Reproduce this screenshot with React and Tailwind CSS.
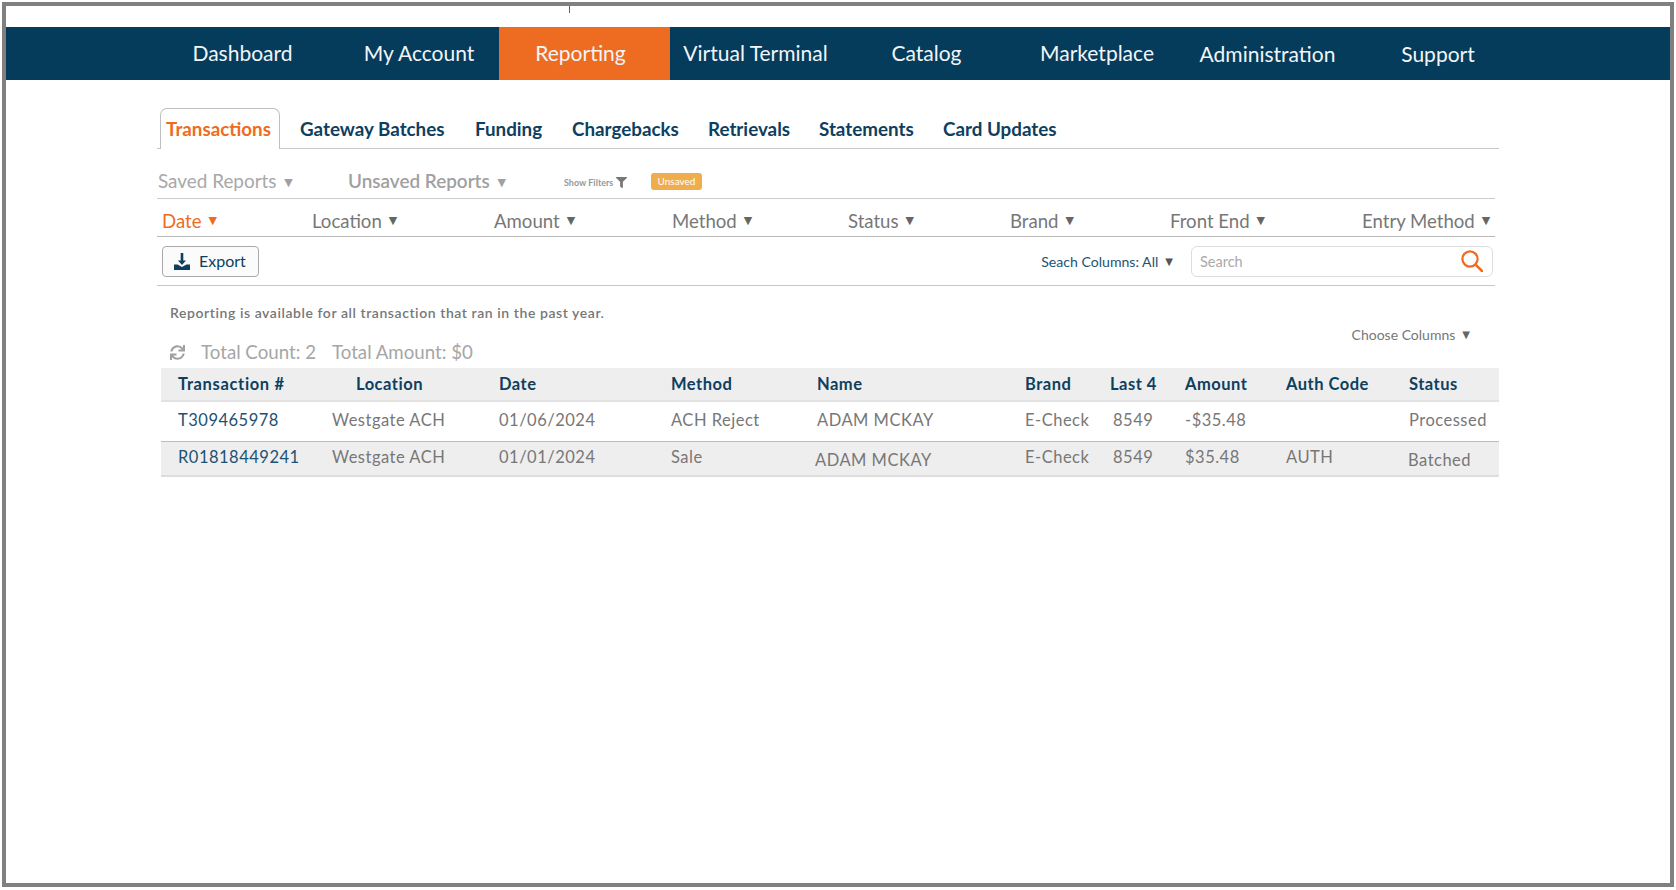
import React from "react";
import { FaSync, FaFilter } from "react-icons/fa";

const navItems = [
  ["Dashboard", "w-[171px] pb-[2px]"],
  ["My Account", "w-[171px] pl-[11px] pb-[2px]"],
  ["Reporting", "w-[171px] pr-[8px] pb-[2px] bg-[#ee6c21]"],
  ["Virtual Terminal", "w-[171px] pb-[2px]"],
  ["Catalog", "w-[171px] pb-[2px]"],
  ["Marketplace", "w-[171px] pr-[1px] pb-[2px]"],
  ["Administration", "w-[171px] pr-[2px]"],
  ["Support", "w-[171px] pr-[3px]"],
];

const tabs = [
  ["Gateway Batches", "w-[175px]"],
  ["Funding", "w-[97px]"],
  ["Chargebacks", "w-[136px]"],
  ["Retrievals", "w-[111px]"],
  ["Statements", "w-[124px]"],
  ["Card Updates", "w-auto"],
];

const filters = [
  ["Date", "w-[150px] text-[#ee6c21]"],
  ["Location", "w-[182px] text-[#777777]"],
  ["Amount", "w-[178px] text-[#777777]"],
  ["Method", "w-[176px] text-[#777777]"],
  ["Status", "w-[162px] text-[#777777]"],
  ["Brand", "w-[160px] text-[#777777]"],
  ["Front End", "w-[192px] text-[#777777]"],
  ["Entry Method", "text-[#777777]"],
];

const cols =
  "grid grid-cols-[154px_167px_172px_146px_208px_85px_75px_101px_123px_1fr] pl-[17px]";

function Arrow({ className = "" }) {
  return <span className={"font-['DejaVu_Sans'] " + className}>▼</span>;
}

function ExportIcon() {
  return (
    <svg viewBox="0 0 16 17" className="h-[17px] w-[16px] fill-[#0d4060]">
      <path d="M6.7 0h2.6v7.5h2.7L8 12 4 7.5h2.7z" />
      <path d="M0 11.5h3.6L8 14l4.4-2.5H16V17H0z" />
    </svg>
  );
}

function SearchIcon() {
  return (
    <svg viewBox="0 0 22 22" fill="none" className="h-[22px] w-[22px] stroke-[#ee6c21]">
      <circle cx="9" cy="9" r="7.6" strokeWidth="2.2" />
      <path d="M14.6 14.6 21 21" strokeWidth="2.6" strokeLinecap="round" />
    </svg>
  );
}

function Row({ id, date, method, name, auth, amount, status, shade }) {
  return (
    <div
      className={
        cols +
        " text-[16.5px] tracking-[0.5px] text-[#777777] " +
        (shade
          ? "h-[35px] border-b-2 border-[#dddddd] bg-[#eeeeee] pt-[3px] leading-[24px]"
          : "h-[40px] border-b border-[#bbbbbb] pt-[6px] leading-[24px]")
      }
    >
      <span className="text-[#1d5272]">{id}</span>
      <span>Westgate ACH</span>
      <span>{date}</span>
      <span>{method}</span>
      <span className={shade ? "-ml-[2px] pt-[3px]" : ""}>{name}</span>
      <span>E-Check</span>
      <span className="pl-[3px]">8549</span>
      <span>{amount}</span>
      <span>{auth}</span>
      <span className={shade ? "-ml-[1px] pt-[3px]" : ""}>{status}</span>
    </div>
  );
}

export default function App() {
  return (
    <div className="h-[890px] w-[1676px] bg-white p-[2px] font-['Lato',sans-serif]">
      <div className="h-[885px] w-[1672px] border-4 border-[#808080] bg-white pt-[21px]">
        <div className="relative">
          <span className="absolute -top-[21px] left-[563px] h-[7px] w-[1px] bg-[#3c6e8f]" />
        </div>
        <nav className="flex h-[53px] w-[1664px] bg-[#053c5c] pl-[151px] text-[21px] text-[#f2f5f7]">
          {navItems.map(([label, cls]) => (
            <a key={label} className={"flex h-full items-center justify-center " + cls}>
              {label}
            </a>
          ))}
        </nav>

        <main className="ml-[151px] mt-[28px] w-[1342px]">
          <div className="flex h-[41px] items-end border-b border-[#c8c8c8] text-[18.8px] font-bold text-[#0d4060]">
            <a className="-mb-px ml-[3px] mr-[20px] flex h-[41px] w-[120px] items-center justify-center rounded-t-[7px] border border-b-0 border-[#c0c0c0] bg-white pr-[3px] text-[#ee6c21]">
              Transactions
            </a>
            {tabs.map(([t, w]) => (
              <a key={t} className={"flex h-[40px] items-center pt-[2px] " + w}>
                {t}
              </a>
            ))}
          </div>

          <div className="w-[1338px]">
            <div className="flex h-[50px] items-center border-b border-[#cccccc] pl-px pt-[15px]">
              <span className="w-[190px] text-[18.9px] text-[#a8a8a8]">
                Saved Reports <Arrow className="ml-[3px] align-[2px] text-[11px] text-[#a0a0a0]" />
              </span>
              <span className="w-[216px] text-[18.9px] font-semibold text-[#a0a0a0]">
                Unsaved Reports <Arrow className="ml-[3px] align-[2px] text-[11px] text-[#a0a0a0]" />
              </span>
              <span className="flex w-[87px] items-center pt-[3px] text-[9px] font-bold text-[#999999]">
                Show Filters
                <FaFilter className="ml-[3px] h-[11px] w-[11px] text-[#777777]" />
              </span>
              <span className="flex h-[17px] w-[51px] items-center justify-center rounded-[3px] bg-[#f0ad4e] text-[10px] text-white">
                Unsaved
              </span>
            </div>

            <div className="flex h-[38px] items-center border-b border-[#b8b8b8] pl-[5px] pt-[8px] text-[18.6px]">
              {filters.map(([label, cls]) => (
                <span key={label} className={"flex items-center whitespace-nowrap " + cls}>
                  {label}
                  <Arrow className={"ml-[7px] text-[11px] " + (label === "Date" ? "text-[#ee6c21]" : "text-[#666666]")} />
                </span>
              ))}
            </div>

            <div className="flex h-[49px] items-center border-b border-[#c8c8c8] pl-[5px] pr-[2px]">
              <button className="flex h-[31px] w-[97px] items-center rounded-[4px] border border-[#aaaaaa] bg-[#fbfbfb] pl-[11px] text-[16px] text-[#0d4060]">
                <ExportIcon />
                <span className="ml-[9px]">Export</span>
              </button>
              <span className="ml-auto flex items-center pt-[1px] text-[14.1px] text-[#1d5272]">
                Seach Columns: All
                <Arrow className="ml-[7px] text-[10px] text-[#555555]" />
              </span>
              <div className="ml-[18px] flex h-[31px] w-[302px] items-center justify-between rounded-[6px] border border-[#dddddd] pl-[8px] pr-[9px] text-[14.5px] text-[#aaaaaa]">
                <span className="pt-[2px]">Search</span>
                <SearchIcon />
              </div>
            </div>
          </div>

          <div className="h-[82px] w-[1338px] pl-[13px]">
            <p className="pt-[17px] text-[14px] font-semibold leading-[20px] tracking-[0.57px] text-[#777777]">
              Reporting is available for all transaction that ran in the past year.
            </p>
            <div className="flex items-start justify-between pr-[25px]">
              <div className="flex items-center pt-[16px] text-[18.7px] leading-[26px] text-[#a6a6a6]">
                <FaSync className="h-[15px] w-[15px] text-[#a0a0a0]" />
                <span className="ml-[16px]">Total Count: 2</span>
                <span className="ml-[16px]">Total Amount: $0</span>
              </div>
              <span className="mt-[1px] flex items-center text-[14px] text-[#777777]">
                Choose Columns
                <Arrow className="ml-[7px] text-[10px] text-[#666666]" />
              </span>
            </div>
          </div>

          <div className="ml-[4px] w-[1338px]">
            <div className={cols + " h-[34px] items-center border-b-2 border-[#e2e2e2] bg-[#eeeeee] text-[16.5px] font-bold tracking-[0.5px] text-[#0d4060]"}>
              <span className="tracking-[0.65px]">Transaction #</span>
              <span className="pl-[24px]">Location</span>
              <span>Date</span>
              <span>Method</span>
              <span>Name</span>
              <span>Brand</span>
              <span>Last 4</span>
              <span>Amount</span>
              <span>Auth Code</span>
              <span>Status</span>
            </div>
            <Row id="T309465978" date="01/06/2024" method="ACH Reject" name="ADAM MCKAY" amount="-$35.48" auth="" status="Processed" />
            <Row shade id="R01818449241" date="01/01/2024" method="Sale" name="ADAM MCKAY" amount="$35.48" auth="AUTH" status="Batched" />
          </div>
        </main>
      </div>
    </div>
  );
}
